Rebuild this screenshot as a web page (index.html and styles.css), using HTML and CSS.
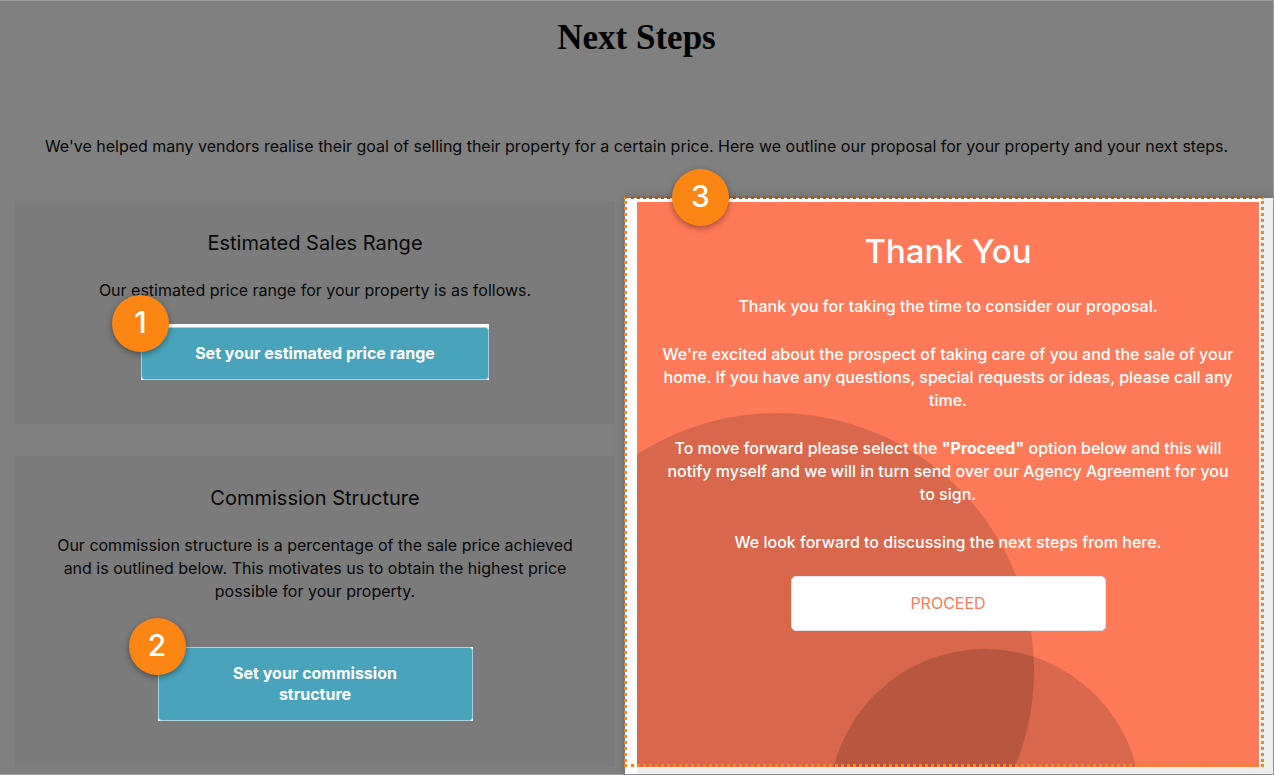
FILE: index.html
```html
<!DOCTYPE html>
<html lang="en">

<head>
  <meta charset="UTF-8">
  <meta name="viewport" content="width=device-width, initial-scale=1.0">
  <title>Next Steps</title>
  <link rel="stylesheet" href="styles.css">
</head>

<body>
  <div class="page">
    <header class="intro">
      <h1>Next Steps</h1>
      <p>We've helped many vendors realise their goal of selling their property for a certain price. Here we outline our proposal for your property and your next steps.</p>
    </header>
    <main class="columns">
      <div class="left">
        <section class="card">
          <h2>Estimated Sales Range</h2>
          <p>Our estimated price range for your property is as follows.</p>
          <div class="target target-price">
            <button type="button">Set your estimated price range</button>
            <span class="badge">1</span>
          </div>
        </section>
        <section class="card card-commission">
          <h2>Commission Structure</h2>
          <p>Our commission structure is a percentage of the sale price achieved and is outlined below. This motivates us to obtain the highest price possible for your property.</p>
          <div class="target target-commission">
            <button type="button">Set your commission structure</button>
            <span class="badge">2</span>
          </div>
        </section>
      </div>
      <div class="frame">
        <section class="thanks">
          <h2>Thank You</h2>
          <p>Thank you for taking the time to consider our proposal.</p>
          <p>We're excited about the prospect of taking care of you and the sale of your home. If you have any questions, special requests or ideas, please call any time.</p>
          <p>To move forward please select the <b>"Proceed"</b> option below and this will notify myself and we will in turn send over our Agency Agreement for you to sign.</p>
          <p>We look forward to discussing the next steps from here.</p>
          <button type="button" class="proceed">PROCEED</button>
        </section>
        <div class="outline"></div>
        <span class="badge">3</span>
      </div>
    </main>
  </div>
</body>

</html>
```
FILE: styles.css
```css
* {
  margin: 0;
  padding: 0;
  box-sizing: border-box;
}

body {
  font: 16px/23px Inter, "Noto Sans", sans-serif;
  color: #080808;
  background-color: #808080;
  text-align: center;
}

button {
  font: inherit;
  cursor: pointer;
}

.page {
  display: flex;
  flex-direction: column;
  min-height: 100vh;
  border: 1px solid #a0a0a0;
  border-left: 0;
}

.intro {
  padding: 14px 15px 40px;
}

.intro h1 {
  margin-bottom: 74px;
  font: bold 35px/46px "Liberation Serif", serif;
  color: #000;
}

.columns {
  flex: 1;
  display: grid;
  grid-template-columns: 600fr 648fr;
  gap: 10px;
  padding-left: 15px;
}

.left {
  display: flex;
  flex-direction: column;
  gap: 32px;
  padding: 3px 0 7px;
}

.card {
  padding: 30px 36px 44px;
  background-color: #7b7b7b;
}

.card h2 {
  margin-bottom: 24px;
  font-size: 20px;
  line-height: 24px;
  font-weight: 400;
}

/* white patch that lifts the button out of the shade */
.target {
  position: relative;
  margin: 22px auto 0;
  background-color: #fff;
}

.target button {
  display: block;
  width: 100%;
  padding: 14px 50px;
  border: 1px solid #a8d3de;
  border-radius: 4px;
  color: #fff;
  background-color: #49a3bb;
  font-weight: bold;
}

.target-price {
  max-width: 348px;
  padding-top: 3px;
}

.card-commission {
  flex: 1;
}

.target-commission {
  max-width: 315px;
  margin-top: 44px;
}

.target-commission button {
  padding: 15px 70px;
  line-height: 21px;
}

.badge {
  position: absolute;
  top: -29px;
  left: -29px;
  width: 57px;
  height: 57px;
  border-radius: 50%;
  color: #fff;
  background-color: #fb8614;
  box-shadow: 0 2px 6px rgba(0, 0, 0, .4);
  font-size: 30px;
  line-height: 54px;
  font-weight: 500;
}

.frame {
  position: relative;
  padding: 4px 14px 7px 12px;
  background: linear-gradient(to right, #fff 12px, #eee 12px);
  box-shadow: 0 0 10px rgba(0, 0, 0, .25);
}

.thanks {
  position: relative;
  height: 100%;
  padding: 29px 22px 60px;
  overflow: hidden;
  color: #fff;
  background-color: #ff7a59;
}

.thanks::before,
.thanks::after {
  content: "";
  position: absolute;
  border-radius: 50%;
  background-color: rgba(0, 0, 0, .15);
}

.thanks::before {
  top: 211px;
  left: -117px;
  width: 514px;
  height: 514px;
}

.thanks::after {
  top: 447px;
  left: 192px;
  width: 312px;
  height: 312px;
}

.thanks h2,
.thanks p,
.proceed {
  position: relative;
  z-index: 1;
}

.thanks h2 {
  margin-bottom: 24px;
  font-size: 33px;
  line-height: 40px;
  font-weight: 500;
}

.thanks p {
  margin-bottom: 25px;
  font-weight: 500;
}

.proceed {
  width: 100%;
  max-width: 315px;
  margin-top: -3px;
  padding: 15px;
  border: 1px solid #e4e4e4;
  border-radius: 5px;
  color: #ff7a59;
  background-color: #fff;
}

/* dotted frame over the selected block */
.outline {
  position: absolute;
  top: -2px;
  right: 9px;
  bottom: 7px;
  left: -1px;
  border: 3px dotted #fb8614;
  border-top-color: #a85a10;
  box-shadow: inset -2px 3px #fff;
  z-index: 2;
}

.frame .badge {
  left: 47px;
  z-index: 3;
}
```
